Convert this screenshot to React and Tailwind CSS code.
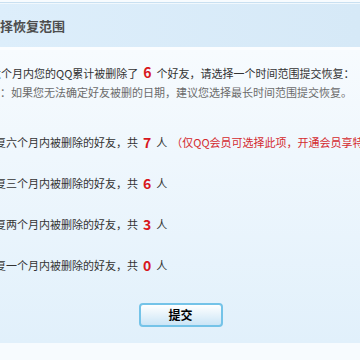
import React from 'react';

const options = [
  { label: '恢复六个月内被删除的好友，共', count: 7, note: '（仅QQ会员可选择此项，开通会员享特权）' },
  { label: '恢复三个月内被删除的好友，共', count: 6 },
  { label: '恢复两个月内被删除的好友，共', count: 3 },
  { label: '恢复一个月内被删除的好友，共', count: 0 },
];

const font = { fontFamily: '"Noto Sans CJK SC", "Liberation Sans", sans-serif' };

export default function App() {
  return (
    <div
      className="w-[360px] h-[360px] overflow-hidden whitespace-nowrap bg-[#f6fafd] flex flex-col"
      style={font}
    >
      {/* Top edge */}
      <div className="h-[2px] bg-[#f7fbfe]" />
      <div className="h-[1px] bg-[#c9e0f1]" />
      <div className="h-[1px] bg-[#f1f8fd]" />

      {/* Title bar */}
      <div className="h-[43px] bg-gradient-to-r from-[#ddeefb] to-[#d6e9f7] flex items-center">
        <span className="-ml-[13px] text-[13px] font-bold text-[#4d4d4d]">选择恢复范围</span>
      </div>
      <div className="h-[3px] bg-[#fbfdff]" />

      {/* Body */}
      <div className="h-[293px] bg-gradient-to-b from-[#f7fbfe] to-[#e1f0fb] flex flex-col">
        <div className="pt-[13px] -ml-[21px] text-[11px] leading-[19px]">
          <p className="text-[#333]">
            近六个月内您的QQ累计被删除了
            <span className="mx-[5px] text-[14px] font-bold text-[#d8171d]">6</span>
            个好友，请选择一个时间范围提交恢复：
          </p>
          <p className="text-[#6b6b6b] -ml-[1px]">提示：如果您无法确定好友被删的日期，建议您选择最长时间范围提交恢复。</p>
        </div>

        <div className="mt-[31px] flex flex-col gap-[22px] -ml-[16px] text-[11px] text-[#333]">
          {options.map((o) => (
            <div key={o.count} className="h-[19px] flex items-center">
              <span>{o.label}</span>
              <span className="mx-[5px] text-[14px] font-bold text-[#d8171d]">{o.count}</span>
              <span>人</span>
              {o.note && <span className="ml-[4px] text-[#d42a2f]">{o.note}</span>}
            </div>
          ))}
        </div>

        <div className="mt-[28px] flex justify-center">
          <button className="w-[84px] h-[24px] rounded-[4px] border-2 border-[#74c3e8] bg-gradient-to-b from-white to-[#cbe5f6] text-[12px] font-bold text-black ml-[1px]">
            提交
          </button>
        </div>
      </div>

      {/* Bottom strip */}
      <div className="flex-1 bg-[#f7fbfe]" />
    </div>
  );
}
